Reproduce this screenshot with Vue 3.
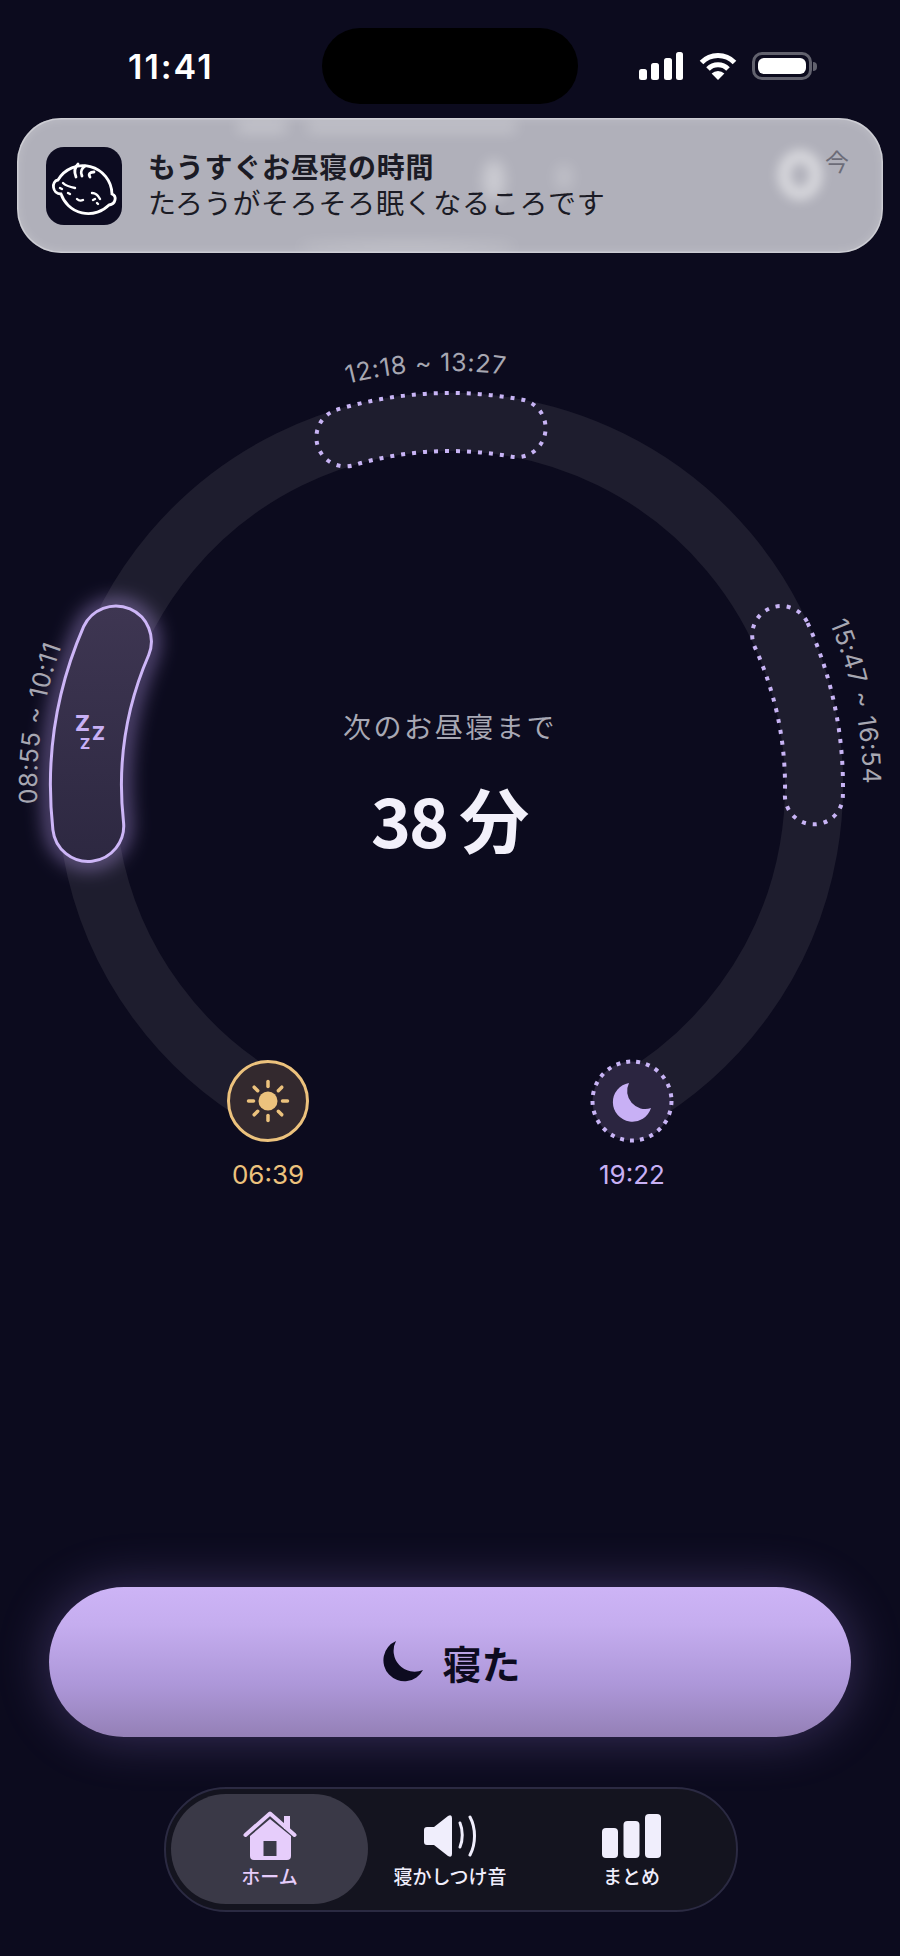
<script setup>
// ring geometry, angles are degrees clockwise from 12 o'clock
const cx = 450
const cy = 786
const ringR = 364

function pt(deg, off = 0) {
	const a = (deg * Math.PI) / 180
	const r = ringR + off
	return [(cx + r * Math.sin(a)).toFixed(1), (cy - r * Math.cos(a)).toFixed(1)].join(' ')
}

function arc(from, to, off = 0) {
	const r = ringR + off
	const large = Math.abs(to - from) > 180 ? 1 : 0
	const sweep = to > from ? 1 : 0
	return `A${r} ${r} 0 ${large} ${sweep} ${pt(to, off)}`
}

function line(from, to, off = 0) {
	return `M${pt(from, off)} ${arc(from, to, off)}`
}

function capsule(from, to, w) {
	const h = w / 2
	return `M${pt(from, h)} ${arc(from, to, h)} A${h} ${h} 0 0 1 ${pt(to, -h)} ${arc(to, from, -h)} A${h} ${h} 0 0 1 ${pt(from, h)} Z`
}

const ringPath = line(-150, 150)
const activePath = capsule(-96.3, -66.5, 71)
const plannedPaths = [capsule(-16.8, 10.6, 58), capsule(65.5, 91.7, 58)]

const labels = [
	{ id: 'arc-a', text: '08:55 ~ 10:11', d: line(-92.5, -55, 49) },
	{ id: 'arc-b', text: '12:18 ~ 13:27', d: line(-14.3, 25, 51) },
	{ id: 'arc-c', text: '15:47 ~ 16:54', d: line(66.8, 105, 49) },
]

const rays = [0, 45, 90, 135, 180, 225, 270, 315].map((deg) => {
	const a = (deg * Math.PI) / 180
	return {
		x1: (268 + 14.5 * Math.sin(a)).toFixed(1),
		y1: (1101 - 14.5 * Math.cos(a)).toFixed(1),
		x2: (268 + 19.5 * Math.sin(a)).toFixed(1),
		y2: (1101 - 19.5 * Math.cos(a)).toFixed(1),
	}
})
</script>

<template>
	<div class="page">
		<header class="status">
			<span class="status__time">11:41</span>
			<div class="status__island"></div>
			<div class="status__icons">
				<svg width="44" height="28" viewBox="0 0 44 28">
					<rect x="0" y="17" width="8" height="11" rx="2.5" />
					<rect x="12" y="11" width="8" height="17" rx="2.5" />
					<rect x="25" y="6" width="8" height="22" rx="2.5" />
					<rect x="37" y="0" width="7" height="28" rx="2.5" />
				</svg>
				<svg width="38" height="28" viewBox="0 0 38 28" class="status__wifi">
					<path d="M2.5 10.5 A23 23 0 0 1 35.5 10.5" />
					<path d="M9 17 A14 14 0 0 1 29 17" />
					<path class="status__wifi-dot" d="M19 28 L12.6 21.6 A9 9 0 0 1 25.4 21.6 Z" />
				</svg>
				<div class="status__battery">
					<div class="status__charge"></div>
				</div>
				<div class="status__nub"></div>
			</div>
		</header>

		<section class="notice">
			<span class="notice__blob notice__blob--ring"></span>
			<span class="notice__blob notice__blob--a"></span>
			<span class="notice__blob notice__blob--b"></span>
			<span class="notice__blob notice__blob--c"></span>
			<span class="notice__blob notice__blob--e"></span>
			<span class="notice__blob notice__blob--d"></span>
			<div class="notice__icon">
				<svg width="76" height="78" viewBox="0 0 76 78" fill="none" stroke="#fff" stroke-width="2.800" stroke-linecap="round">
					<path d="M12 33 A29 29 0 0 1 66 47 C71 49 70 57 63 58 A29 29 0 0 1 15 47 C6 47 5 34 12 33 Z" />
					<path d="M30 30 C28 25 29 20 32 17" />
					<path d="M36 29 C34 25 36 21 39 19" />
					<path d="M44 30 C42 27 44 25 48 25" />
					<path d="M17 36 C20 39 24 40 29 41" stroke-width="2.400" />
					<path d="M14 41 L16 42 M22 46 L24 47" stroke-width="2.400" />
					<path d="M46 46 C49 46 52 48 54 52" stroke-width="2.400" />
					<path d="M47 53 L49 52 M51 56 L52 57" stroke-width="2.400" />
					<path d="M31 52 C33 54 35 54 37 53" stroke-width="2.400" />
				</svg>
			</div>
			<div class="notice__text">
				<div class="notice__title">もうすぐお昼寝の時間</div>
				<div class="notice__body">たろうがそろそろ眠くなるころです</div>
			</div>
			<span class="notice__when">今</span>
		</section>

		<section class="stage">
			<svg class="stage__svg" width="900" height="970" viewBox="0 253 900 970">
				<defs>
					<filter id="glow" x="-40%" y="-20%" width="180%" height="140%">
						<feGaussianBlur stdDeviation="10" />
					</filter>
					<linearGradient id="active-fill" x1="0" y1="0" x2="0" y2="1">
						<stop offset="0" stop-color="#3e3652" />
						<stop offset="1" stop-color="#2d2841" />
					</linearGradient>
				</defs>

				<path :d="ringPath" class="ring" />

				<path v-for="d in plannedPaths" :key="d" :d="d" class="planned" />

				<path :d="activePath" class="active__glow" filter="url(#glow)" />
				<path :d="activePath" class="active" />

				<text x="75" y="731" class="zzz zzz--lg">Z</text>
				<text x="92" y="740" class="zzz zzz--md">Z</text>
				<text x="80" y="749" class="zzz zzz--sm">Z</text>

				<path v-for="l in labels" :id="l.id" :key="l.id" :d="l.d" fill="none" />
				<text v-for="l in labels" :key="l.id + '-t'" class="arc-label">
					<textPath :href="'#' + l.id">{{ l.text }}</textPath>
				</text>

				<circle cx="268" cy="1101" r="39.5" class="sun" />
				<circle cx="268" cy="1101" r="9.5" fill="#ecc27d" />
				<line v-for="(r, i) in rays" :key="i" v-bind="r" class="sun__ray" />
				<text x="268" y="1184" class="edge-time edge-time--sun">06:39</text>

				<circle cx="632" cy="1101" r="39.5" class="moon" />
				<path d="M629 1083 A19.5 19.5 0 1 0 651 1108 A18 18 0 0 1 629 1083 Z" fill="#c8b0f5" />
				<text x="632" y="1184" class="edge-time edge-time--moon">19:22</text>
			</svg>

			<div class="countdown">
				<div class="countdown__hint">次のお昼寝まで</div>
				<div class="countdown__value">
					<span class="countdown__num">38</span>
					<span>分</span>
				</div>
			</div>
		</section>

		<button class="sleep-btn" type="button">
			<svg width="44" height="42" viewBox="0 0 44 42">
				<path d="M17 0 A21 21 0 1 0 44 29 A21 21 0 0 1 17 0 Z" fill="#0d0b20" />
			</svg>
			<span>寝た</span>
		</button>

		<nav class="tabs">
			<a class="tabs__item tabs__item--active">
				<span class="tabs__icon">
					<svg width="54" height="49" viewBox="0 0 54 49">
						<path d="M41 5 h6 v13 h-6 Z" fill="#e6cdfb" />
						<path d="M2.5 24 L27 2.5 L51.500 24" fill="none" stroke="#e6cdfb" stroke-width="4" stroke-linecap="round" stroke-linejoin="round" />
						<path fill-rule="evenodd" fill="#e6cdfb" d="M7 25 L27 8 L48 25 V45 a4 4 0 0 1 -4 4 H11 a4 4 0 0 1 -4 -4 Z M20.500 30 V45 H33.500 V30 Z" />
					</svg>
				</span>
				<span class="tabs__label">ホーム</span>
			</a>
			<a class="tabs__item">
				<span class="tabs__icon">
					<svg width="53" height="42" viewBox="0 0 53 42">
						<path fill="#f0eefc" d="M3 12 H10 L24 1 Q28 -1 28 3 V39 Q28 43 24 41 L10 30 H3 Q0 30 0 27 V15 Q0 12 3 12 Z" />
						<path d="M36 8 C39 15 39 25 36 32" fill="none" stroke="#f0eefc" stroke-width="3" stroke-linecap="round" />
						<path d="M46 2 C52 13 52 29 46 40" fill="none" stroke="#f0eefc" stroke-width="3" stroke-linecap="round" />
					</svg>
				</span>
				<span class="tabs__label">寝かしつけ音</span>
			</a>
			<a class="tabs__item">
				<span class="tabs__icon">
					<svg width="59" height="44" viewBox="0 0 59 44" fill="#f0eefc">
						<rect x="0" y="14" width="16" height="30" rx="4" />
						<rect x="21.500" y="7" width="16" height="37" rx="4" />
						<rect x="43" y="0" width="16" height="44" rx="4" />
					</svg>
				</span>
				<span class="tabs__label">まとめ</span>
			</a>
		</nav>
	</div>
</template>

<style>
html,
body {
	margin: 0;
	background: #0c0b1e;
}
</style>

<style scoped>
.page {
	position: relative;
	display: flex;
	flex-direction: column;
	width: 900px;
	height: 1956px;
	overflow: hidden;
	background: #0c0b1e;
	font-family: Inter, "Noto Sans CJK JP", sans-serif;
}

.status {
	display: grid;
	grid-template-columns: 322px 256px 1fr;
	align-items: center;
	box-sizing: border-box;
	height: 118px;
	padding: 28px 0 14px;
}

.status__time {
	padding-left: 128px;
	font-size: 34px;
	font-weight: 600;
	letter-spacing: 2px;
	color: #fff;
}

.status__island {
	height: 76px;
	border-radius: 38px;
	background: #000;
}

.status__icons {
	display: flex;
	align-items: center;
	padding-left: 61px;
	fill: #fff;
}

.status__wifi {
	margin-left: 16px;
	fill: none;
	stroke: #fff;
	stroke-width: 5;
}

.status__wifi-dot {
	fill: #fff;
	stroke: none;
}

.status__battery {
	box-sizing: border-box;
	width: 60px;
	height: 28px;
	margin-left: 15px;
	padding: 3px;
	border: 3px solid #62626e;
	border-radius: 10px;
}

.status__charge {
	height: 100%;
	border-radius: 6px;
	background: #fff;
}

.status__nub {
	width: 4px;
	height: 9px;
	margin-left: 1px;
	border-radius: 0 4px 4px 0;
	background: #62626e;
}

.notice {
	position: relative;
	display: flex;
	align-items: center;
	gap: 26px;
	box-sizing: border-box;
	height: 135px;
	margin: 0 17px;
	padding-left: 29px;
	overflow: hidden;
	border-radius: 44px;
	background: #b0b0ba;
	box-shadow: inset 0 0 0 1.5px rgba(255, 255, 255, 0.3), inset 0 0 12px rgba(255, 255, 255, 0.22);
}

.notice__blob {
	position: absolute;
	border-radius: 50%;
	background: rgba(255, 255, 255, 0.7);
	filter: blur(7px);
}

.notice__blob--ring {
	top: 32px;
	left: 761px;
	width: 20px;
	height: 26px;
	background: transparent;
	border: 12px solid rgba(255, 255, 255, 0.55);
	filter: blur(6px);
}

.notice__blob--a {
	top: 42px;
	left: 466px;
	width: 22px;
	height: 40px;
	background: rgba(255, 255, 255, 0.35);
}

.notice__blob--b {
	top: 46px;
	left: 538px;
	width: 18px;
	height: 26px;
	background: rgba(255, 255, 255, 0.2);
}

.notice__blob--c {
	top: 4px;
	left: 220px;
	width: 50px;
	height: 10px;
	border-radius: 6px;
	background: rgba(255, 255, 255, 0.32);
}

.notice__blob--e {
	top: 4px;
	left: 290px;
	width: 210px;
	height: 10px;
	border-radius: 6px;
	background: rgba(255, 255, 255, 0.28);
}

.notice__blob--d {
	top: 126px;
	left: 280px;
	width: 220px;
	height: 5px;
	background: rgba(255, 255, 255, 0.45);
}

.notice__icon {
	z-index: 1;
	width: 76px;
	height: 78px;
	flex: none;
	border-radius: 18px;
	background: #0c0b20;
}

.notice__text {
	z-index: 1;
	color: #1b1b25;
	letter-spacing: 0.7px;
}

.notice__title {
	font-size: 28px;
	font-weight: 700;
	line-height: 36px;
}

.notice__body {
	font-size: 28px;
	font-weight: 400;
	line-height: 36px;
}

.notice__when {
	position: absolute;
	top: 25px;
	right: 34px;
	font-size: 24px;
	color: #6c6c78;
}

.stage {
	position: relative;
	height: 970px;
}

.stage__svg {
	display: block;
}

.ring {
	fill: none;
	stroke: #1e1d2e;
	stroke-width: 58;
}

.planned {
	fill: #1e1d2e;
	stroke: #c8b4f5;
	stroke-width: 4;
	stroke-dasharray: 4 7;
}

.active__glow {
	fill: none;
	stroke: rgba(200, 170, 255, 0.8);
	stroke-width: 9;
}

.active {
	fill: url(#active-fill);
	stroke: #cdb6f7;
	stroke-width: 3;
}

.zzz {
	fill: #c8b0f5;
	font-weight: 800;
}

.zzz--lg {
	font-size: 22px;
}

.zzz--md {
	font-size: 19px;
}

.zzz--sm {
	font-size: 15px;
}

.arc-label {
	fill: #a7a7b2;
	font-size: 25px;
	letter-spacing: 0.6px;
}

.sun {
	fill: #33292e;
	stroke: #ecc27d;
	stroke-width: 3;
}

.sun__ray {
	stroke: #ecc27d;
	stroke-width: 3.500;
	stroke-linecap: round;
}

.moon {
	fill: #2b2540;
	stroke: #c8b4f5;
	stroke-width: 4;
	stroke-dasharray: 4 6;
}

.edge-time {
	font-size: 26px;
	text-anchor: middle;
}

.edge-time--sun {
	fill: #ecc27d;
}

.edge-time--moon {
	fill: #c8b0f5;
}

.countdown {
	position: absolute;
	top: 453px;
	left: 0;
	width: 100%;
	font-family: "Noto Sans CJK JP", sans-serif;
	text-align: center;
}

.countdown__hint {
	font-size: 28px;
	line-height: 40px;
	letter-spacing: 2.600px;
	color: #a8a8b4;
}

.countdown__value {
	display: flex;
	justify-content: center;
	align-items: baseline;
	gap: 12px;
	margin-top: 27px;
	font-size: 70px;
	font-weight: 700;
	line-height: 90px;
	color: #f2f0fa;
}

.countdown__num {
	font-size: 68px;
	letter-spacing: -2px;
}

.sleep-btn {
	display: flex;
	align-items: center;
	justify-content: center;
	gap: 19px;
	height: 150px;
	margin: auto 49px 0;
	border: 0;
	border-radius: 75px;
	background: linear-gradient(180deg, #cdb4f6 0%, #c5adef 25%, #ad97d9 65%, #9480b6 100%);
	box-shadow: 0 0 52px rgba(170, 140, 240, 0.3);
	color: #0d0b20;
	font-family: inherit;
	font-size: 39px;
	font-weight: 700;
}

.tabs {
	display: grid;
	grid-template-columns: 197px 164px 1fr;
	box-sizing: border-box;
	width: 574px;
	height: 125px;
	margin: 50px 0 44px 164px;
	padding: 5px;
	border: 2px solid #2b2a42;
	border-radius: 62px;
	background: #14141f;
}

.tabs__item {
	display: flex;
	flex-direction: column;
	align-items: center;
	height: 110px;
	box-sizing: border-box;
	padding-top: 17px;
	border-radius: 55px;
	color: #f0eefc;
}

.tabs__item--active {
	background: #3a3947;
	color: #e6cdfb;
}

.tabs__icon {
	display: flex;
	align-items: center;
	height: 49px;
}

.tabs__label {
	margin-top: 6px;
	font-size: 19px;
	font-weight: 500;
	line-height: 24px;
	white-space: nowrap;
}
</style>
